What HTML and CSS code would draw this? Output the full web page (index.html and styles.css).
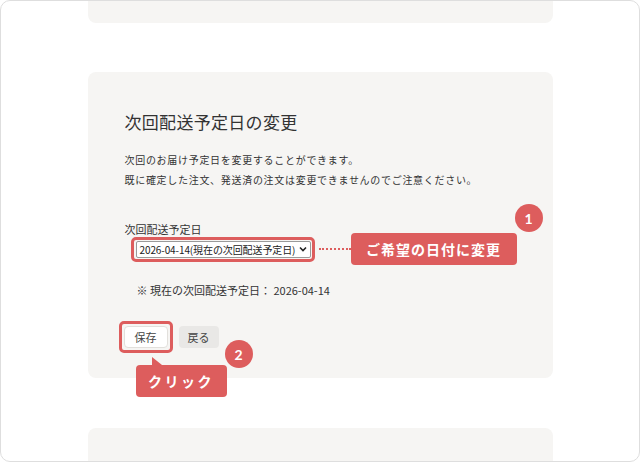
FILE: index.html
```html
<!DOCTYPE html>
<html lang="ja">
<head>
    <meta charset="UTF-8">
    <title>次回配送予定日の変更</title>
    <link rel="stylesheet" href="styles.css">
</head>
<body>
    <div class="frame">
        <div class="card card-top"></div>

        <div class="card card-main">
            <h2 class="title">次回配送予定日の変更</h2>
            <p class="lead">次回のお届け予定日を変更することができます。<br>既に確定した注文、発送済の注文は変更できませんのでご注意ください。</p>

            <div class="label">次回配送予定日</div>
            <div class="field">
                <div class="mark mark-select">
                    <div class="select">
                        <span>2026-04-14(現在の次回配送予定日)</span>
                        <svg class="chevron" width="8" height="6" viewBox="0 0 8 6"><path d="M1 1.5 L4 4.5 L7 1.5" fill="none" stroke="#222" stroke-width="1.6"/></svg>
                    </div>
                </div>
                <div class="dots"></div>
                <div class="callout callout-date">ご希望の日付に変更</div>
                <div class="badge badge-one">1</div>
            </div>

            <p class="note">※ 現在の次回配送予定日： 2026-04-14</p>

            <div class="actions">
                <div class="mark mark-button">
                    <button class="btn btn-save">保存</button>
                </div>
                <button class="btn btn-back">戻る</button>
                <div class="badge badge-two">2</div>
                <div class="callout callout-click">クリック</div>
            </div>
        </div>

        <div class="card card-bottom"></div>
    </div>
</body>
</html>
```

FILE: styles.css
```css
body {
    margin: 0;
    font-family: "Noto Sans CJK JP", "Noto Sans", sans-serif;
    color: #333;
    background: #fff;
}
.frame {
    width: 640px;
    height: 462px;
    box-sizing: border-box;
    border: 1px solid #dedede;
    border-radius: 10px;
    overflow: hidden;
    background: #fff;
    display: flex;
    flex-direction: column;
    align-items: center;
}
.card {
    width: 465px;
    flex-shrink: 0;
    background: #f6f5f3;
    border-radius: 8px;
    box-sizing: border-box;
}
.card-top {
    height: 22px;
    border-radius: 0 0 8px 8px;
}
.card-main {
    margin-top: 49px;
    height: 306px;
    padding: 38px 37px 0;
    display: flex;
    flex-direction: column;
    align-items: flex-start;
}
.card-bottom {
    margin-top: 50px;
    height: 60px;
}

.title {
    margin: 0;
    font-size: 17px;
    font-weight: normal;
    line-height: 24px;
    letter-spacing: 0.3px;
    color: #333;
}
.lead {
    margin: 16px 0 0;
    font-size: 10px;
    line-height: 20px;
    letter-spacing: 0.7px;
}
.label {
    margin-top: 31px;
    font-size: 11px;
    line-height: 16px;
}

/* select row with annotation */
.field {
    position: relative;
    margin: -4px 0 0 6px;
    display: flex;
    align-items: center;
}
.mark {
    border: 3px solid #dd5d5d;
    border-radius: 5px;
    padding: 1px;
}
.mark-select {
    padding: 1px 1px 1px 2px;
}
.select {
    width: 175px;
    height: 17px;
    box-sizing: border-box;
    border: 1px solid #9a9a9a;
    border-radius: 2px;
    background: #fff;
    display: flex;
    align-items: center;
    justify-content: space-between;
    padding: 0 3px 0 3px;
    font-size: 10px;
    letter-spacing: -0.1px;
    color: #222;
    white-space: nowrap;
}
.chevron {
    flex-shrink: 0;
}
.dots {
    width: 32px;
    margin-left: 4px;
    border-top: 2px dotted #dd5d5d;
}
.callout {
    background: #dd5d5d;
    color: #fff;
    font-weight: bold;
    font-size: 14px;
    border-radius: 4px;
    height: 32px;
    display: flex;
    align-items: center;
    justify-content: center;
    box-sizing: border-box;
}
.callout-date {
    width: 166px;
    letter-spacing: 1px;
}
.badge {
    position: absolute;
    width: 28px;
    height: 28px;
    border-radius: 50%;
    background: #dd5d5d;
    color: #fff;
    font-size: 14px;
    font-weight: bold;
    display: flex;
    align-items: center;
    justify-content: center;
    font-family: "Lato", "Noto Sans", sans-serif;
}
.badge-one {
    left: 384px;
    top: -29px;
}

.note {
    margin: 17px 0 0 12px;
    font-size: 11px;
    line-height: 16px;
}

/* buttons */
.actions {
    position: relative;
    margin: 23px 0 0 -6px;
    display: flex;
    align-items: center;
}
.mark-button {
    padding: 2px;
}
.btn {
    font-family: inherit;
    font-size: 11px;
    color: #444;
    height: 22px;
    padding: 0;
    border-radius: 4px;
    cursor: pointer;
}
.btn-save {
    display: block;
    width: 44px;
    background: #fff;
    border: 1px solid #e2e0dc;
}
.btn-back {
    width: 40px;
    margin-left: 6px;
    background: #e9e8e6;
    border: none;
}
.badge-two {
    left: 106px;
    top: 19px;
}
.callout-click {
    position: absolute;
    left: 17px;
    top: 44px;
    width: 91px;
    letter-spacing: 2.5px;
}
.callout-click::before {
    content: "";
    position: absolute;
    left: 16px;
    top: -8px;
    border-left: 0 solid transparent;
    border-right: 10px solid transparent;
    border-bottom: 8px solid #dd5d5d;
}
```
